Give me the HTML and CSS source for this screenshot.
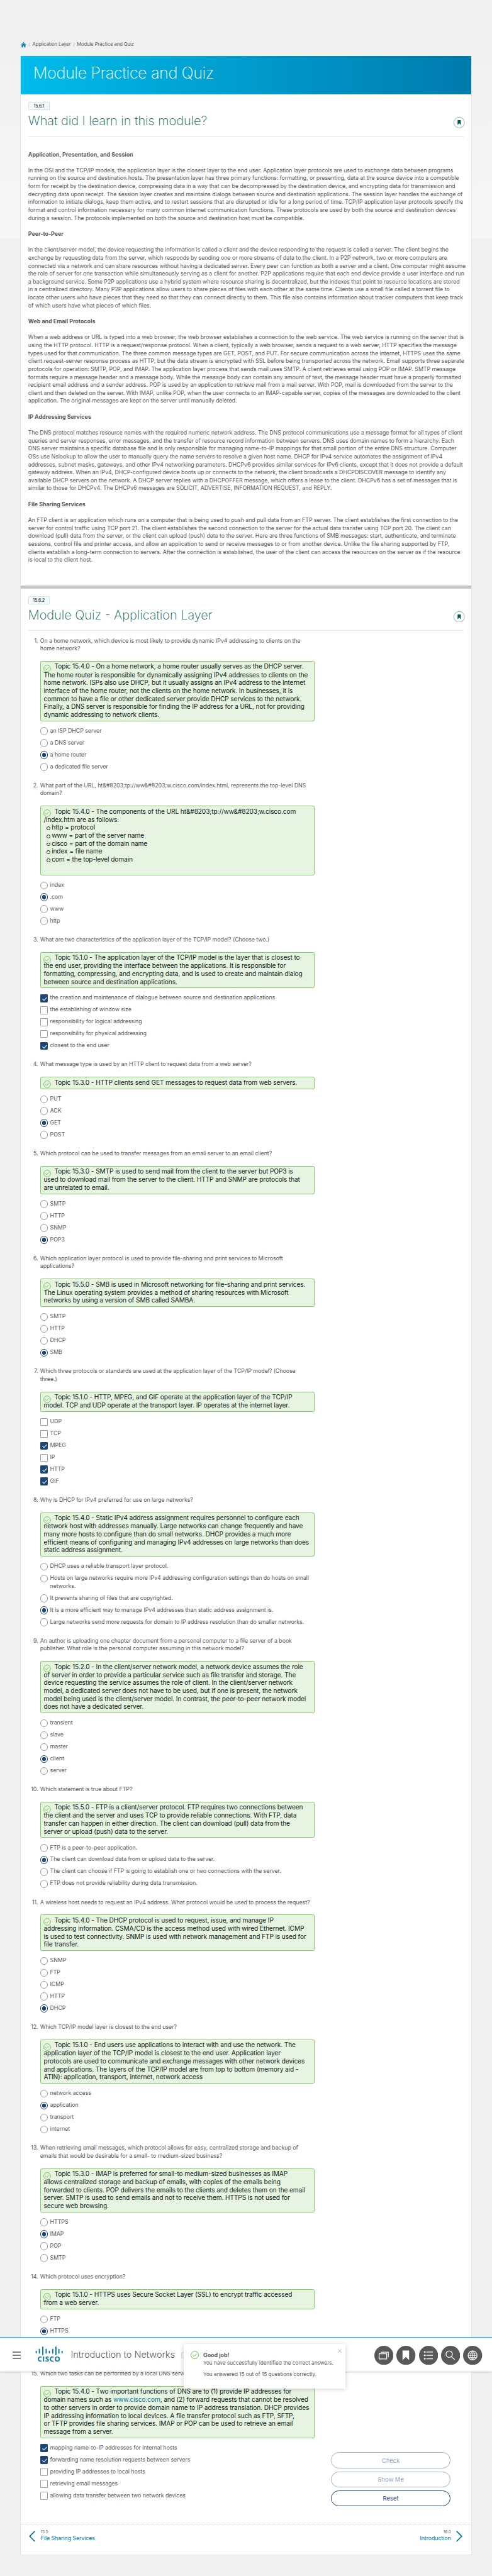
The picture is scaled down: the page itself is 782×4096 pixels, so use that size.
FILE: index.html
```html
<!DOCTYPE html>
<html lang="en">
<head>
<meta charset="utf-8">
<title>Module Practice and Quiz</title>
<link rel="stylesheet" href="styles.css">
</head>
<body>
<svg class="defs" width="0" height="0" aria-hidden="true">
  <symbol id="ok" viewBox="0 0 20 20"><circle cx="10" cy="10" r="9" fill="none" stroke="#6cc04a" stroke-width="1.5"/><path d="M5 10.3l3.3 3.1 6.5-6.6" fill="none" stroke="#6cc04a" stroke-width="1.4"/></symbol>
  <symbol id="flag" viewBox="0 0 28 28"><circle cx="14" cy="14" r="13.4" fill="#fff" stroke="#4f9489" stroke-width="1.1"/><path d="M10 8h8v12l-4-4-4 4z" fill="#005c53"/></symbol>
</svg>
<div class="page">
  <nav class="crumbs">
    <svg width="14" height="13" viewBox="0 0 14 13"><path d="M7 0L0 6.2l.8.9L7 1.7l6.2 5.4.8-.9zM7 2.8L2.2 7v6h3.4V8.6h2.8V13h3.4V7z" fill="#00799e"/></svg>
    <i>/</i><a>Application Layer</a><i>/</i><span>Module Practice and Quiz</span>
  </nav>
  <main class="card">
    <header class="banner"><h1>Module Practice and Quiz</h1></header>

    <section class="topic">
      <span class="badge">15.6.1</span>
      <div class="head"><h2>What did I learn in this module?</h2><svg width="28" height="28"><use href="#flag"/></svg></div>
      <div class="prose">
        <h3>Application, Presentation, and Session</h3>
        <p>In the OSI and the TCP/IP models, the application layer is the closest layer to the end user. Application layer protocols are used to exchange data between programs<br>running on the source and destination hosts. The presentation layer has three primary functions: formatting, or presenting, data at the source device into a compatible<br>form for receipt by the destination device, compressing data in a way that can be decompressed by the destination device, and encrypting data for transmission and<br>decrypting data upon receipt. The session layer creates and maintains dialogs between source and destination applications. The session layer handles the exchange of<br>information to initiate dialogs, keep them active, and to restart sessions that are disrupted or idle for a long period of time. TCP/IP application layer protocols specify the<br>format and control information necessary for many common internet communication functions. These protocols are used by both the source and destination devices<br>during a session. The protocols implemented on both the source and destination host must be compatible.</p>
        <h3>Peer-to-Peer</h3>
        <p>In the client/server model, the device requesting the information is called a client and the device responding to the request is called a server. The client begins the<br>exchange by requesting data from the server, which responds by sending one or more streams of data to the client. In a P2P network, two or more computers are<br>connected via a network and can share resources without having a dedicated server. Every peer can function as both a server and a client. One computer might assume<br>the role of server for one transaction while simultaneously serving as a client for another. P2P applications require that each end device provide a user interface and run<br>a background service. Some P2P applications use a hybrid system where resource sharing is decentralized, but the indexes that point to resource locations are stored<br>in a centralized directory. Many P2P applications allow users to share pieces of files with each other at the same time. Clients use a small file called a torrent file to<br>locate other users who have pieces that they need so that they can connect directly to them. This file also contains information about tracker computers that keep track<br>of which users have what pieces of which files.</p>
        <h3>Web and Email Protocols</h3>
        <p>When a web address or URL is typed into a web browser, the web browser establishes a connection to the web service. The web service is running on the server that is<br>using the HTTP protocol. HTTP is a request/response protocol. When a client, typically a web browser, sends a request to a web server, HTTP specifies the message<br>types used for that communication. The three common message types are GET, POST, and PUT. For secure communication across the internet, HTTPS uses the same<br>client request-server response process as HTTP, but the data stream is encrypted with SSL before being transported across the network. Email supports three separate<br>protocols for operation: SMTP, POP, and IMAP. The application layer process that sends mail uses SMTP. A client retrieves email using POP or IMAP. SMTP message<br>formats require a message header and a message body. While the message body can contain any amount of text, the message header must have a properly formatted<br>recipient email address and a sender address. POP is used by an application to retrieve mail from a mail server. With POP, mail is downloaded from the server to the<br>client and then deleted on the server. With IMAP, unlike POP, when the user connects to an IMAP-capable server, copies of the messages are downloaded to the client<br>application. The original messages are kept on the server until manually deleted.</p>
        <h3>IP Addressing Services</h3>
        <p>The DNS protocol matches resource names with the required numeric network address. The DNS protocol communications use a message format for all types of client<br>queries and server responses, error messages, and the transfer of resource record information between servers. DNS uses domain names to form a hierarchy. Each<br>DNS server maintains a specific database file and is only responsible for managing name-to-IP mappings for that small portion of the entire DNS structure. Computer<br>OSs use Nslookup to allow the user to manually query the name servers to resolve a given host name. DHCP for IPv4 service automates the assignment of IPv4<br>addresses, subnet masks, gateways, and other IPv4 networking parameters. DHCPv6 provides similar services for IPv6 clients, except that it does not provide a default<br>gateway address. When an IPv4, DHCP-configured device boots up or connects to the network, the client broadcasts a DHCPDISCOVER message to identify any<br>available DHCP servers on the network. A DHCP server replies with a DHCPOFFER message, which offers a lease to the client. DHCPv6 has a set of messages that is<br>similar to those for DHCPv4. The DHCPv6 messages are SOLICIT, ADVERTISE, INFORMATION REQUEST, and REPLY.</p>
        <h3>File Sharing Services</h3>
        <p>An FTP client is an application which runs on a computer that is being used to push and pull data from an FTP server. The client establishes the first connection to the<br>server for control traffic using TCP port 21. The client establishes the second connection to the server for the actual data transfer using TCP port 20. The client can<br>download (pull) data from the server, or the client can upload (push) data to the server. Here are three functions of SMB messages: start, authenticate, and terminate<br>sessions, control file and printer access, and allow an application to send or receive messages to or from another device. Unlike the file sharing supported by FTP,<br>clients establish a long-term connection to servers. After the connection is established, the user of the client can access the resources on the server as if the resource<br>is local to the client host.</p>
      </div>
    </section>

    <section class="topic quiz">
      <span class="badge">15.6.2</span>
      <div class="head"><h2>Module Quiz - Application Layer</h2><svg width="28" height="28"><use href="#flag"/></svg></div>
      <ol class="questions">
        <li><p class="ask"><b>1.</b>On a home network, which device is most likely to provide dynamic IPv4 addressing to clients on the<br>home network?</p>
          <div class="note"><svg class="ok"><use href="#ok"/></svg>Topic 15.4.0 - On a home network, a home router usually serves as the DHCP server.<br>The home router is responsible for dynamically assigning IPv4 addresses to clients on the<br>home network. ISPs also use DHCP, but it usually assigns an IPv4 address to the Internet<br>interface of the home router, not the clients on the home network. In businesses, it is<br>common to have a file or other dedicated server provide DHCP services to the network.<br>Finally, a DNS server is responsible for finding the IP address for a URL, not for providing<br>dynamic addressing to network clients.</div>
          <label><input type="radio">an ISP DHCP server</label>
          <label><input type="radio">a DNS server</label>
          <label><input type="radio" checked>a home router</label>
          <label><input type="radio">a dedicated file server</label></li>
        <li><p class="ask"><b>2.</b>What part of the URL, ht&amp;#8203;tp://ww&amp;#8203;w.cisco.com/index.html, represents the top-level DNS<br>domain?</p>
          <div class="note"><svg class="ok"><use href="#ok"/></svg>Topic 15.4.0 - The components of the URL ht&amp;#8203;tp://ww&amp;#8203;w.cisco.com<br>/index.htm are as follows:
            <ul><li>http = protocol</li><li>www = part of the server name</li><li>cisco = part of the domain name</li><li>index = file name</li><li>com = the top-level domain</li></ul></div>
          <label><input type="radio">index</label>
          <label><input type="radio" checked>.com</label>
          <label><input type="radio">www</label>
          <label><input type="radio">http</label></li>
        <li><p class="ask"><b>3.</b>What are two characteristics of the application layer of the TCP/IP model? (Choose two.)</p>
          <div class="note"><svg class="ok"><use href="#ok"/></svg>Topic 15.1.0 - The application layer of the TCP/IP model is the layer that is closest to<br>the end user, providing the interface between the applications. It is responsible for<br>formatting, compressing, and encrypting data, and is used to create and maintain dialog<br>between source and destination applications.</div>
          <label><input type="checkbox" checked>the creation and maintenance of dialogue between source and destination applications</label>
          <label><input type="checkbox">the establishing of window size</label>
          <label><input type="checkbox">responsibility for logical addressing</label>
          <label><input type="checkbox">responsibility for physical addressing</label>
          <label><input type="checkbox" checked>closest to the end user</label></li>
        <li><p class="ask"><b>4.</b>What message type is used by an HTTP client to request data from a web server?</p>
          <div class="note"><svg class="ok"><use href="#ok"/></svg>Topic 15.3.0 - HTTP clients send GET messages to request data from web servers.</div>
          <label><input type="radio">PUT</label>
          <label><input type="radio">ACK</label>
          <label><input type="radio" checked>GET</label>
          <label><input type="radio">POST</label></li>
        <li><p class="ask"><b>5.</b>Which protocol can be used to transfer messages from an email server to an email client?</p>
          <div class="note"><svg class="ok"><use href="#ok"/></svg>Topic 15.3.0 - SMTP is used to send mail from the client to the server but POP3 is<br>used to download mail from the server to the client. HTTP and SNMP are protocols that<br>are unrelated to email.</div>
          <label><input type="radio">SMTP</label>
          <label><input type="radio">HTTP</label>
          <label><input type="radio">SNMP</label>
          <label><input type="radio" checked>POP3</label></li>
        <li><p class="ask"><b>6.</b>Which application layer protocol is used to provide file-sharing and print services to Microsoft<br>applications?</p>
          <div class="note"><svg class="ok"><use href="#ok"/></svg>Topic 15.5.0 - SMB is used in Microsoft networking for file-sharing and print services.<br>The Linux operating system provides a method of sharing resources with Microsoft<br>networks by using a version of SMB called SAMBA.</div>
          <label><input type="radio">SMTP</label>
          <label><input type="radio">HTTP</label>
          <label><input type="radio">DHCP</label>
          <label><input type="radio" checked>SMB</label></li>
        <li><p class="ask"><b>7.</b>Which three protocols or standards are used at the application layer of the TCP/IP model? (Choose<br>three.)</p>
          <div class="note"><svg class="ok"><use href="#ok"/></svg>Topic 15.1.0 - HTTP, MPEG, and GIF operate at the application layer of the TCP/IP<br>model. TCP and UDP operate at the transport layer. IP operates at the internet layer.</div>
          <label><input type="checkbox">UDP</label>
          <label><input type="checkbox">TCP</label>
          <label><input type="checkbox" checked>MPEG</label>
          <label><input type="checkbox">IP</label>
          <label><input type="checkbox" checked>HTTP</label>
          <label><input type="checkbox" checked>GIF</label></li>
        <li><p class="ask"><b>8.</b>Why is DHCP for IPv4 preferred for use on large networks?</p>
          <div class="note"><svg class="ok"><use href="#ok"/></svg>Topic 15.4.0 - Static IPv4 address assignment requires personnel to configure each<br>network host with addresses manually. Large networks can change frequently and have<br>many more hosts to configure than do small networks. DHCP provides a much more<br>efficient means of configuring and managing IPv4 addresses on large networks than does<br>static address assignment.</div>
          <label><input type="radio">DHCP uses a reliable transport layer protocol.</label>
          <label><input type="radio"><span>Hosts on large networks require more IPv4 addressing configuration settings than do hosts on small<br>networks.</span></label>
          <label><input type="radio">It prevents sharing of files that are copyrighted.</label>
          <label><input type="radio" checked>It is a more efficient way to manage IPv4 addresses than static address assignment is.</label>
          <label><input type="radio">Large networks send more requests for domain to IP address resolution than do smaller networks.</label></li>
        <li><p class="ask"><b>9.</b>An author is uploading one chapter document from a personal computer to a file server of a book<br>publisher. What role is the personal computer assuming in this network model?</p>
          <div class="note"><svg class="ok"><use href="#ok"/></svg>Topic 15.2.0 - In the client/server network model, a network device assumes the role<br>of server in order to provide a particular service such as file transfer and storage. The<br>device requesting the service assumes the role of client. In the client/server network<br>model, a dedicated server does not have to be used, but if one is present, the network<br>model being used is the client/server model. In contrast, the peer-to-peer network model<br>does not have a dedicated server.</div>
          <label><input type="radio">transient</label>
          <label><input type="radio">slave</label>
          <label><input type="radio">master</label>
          <label><input type="radio" checked>client</label>
          <label><input type="radio">server</label></li>
        <li><p class="ask"><b>10.</b>Which statement is true about FTP?</p>
          <div class="note"><svg class="ok"><use href="#ok"/></svg>Topic 15.5.0 - FTP is a client/server protocol. FTP requires two connections between<br>the client and the server and uses TCP to provide reliable connections. With FTP, data<br>transfer can happen in either direction. The client can download (pull) data from the<br>server or upload (push) data to the server.</div>
          <label><input type="radio">FTP is a peer-to-peer application.</label>
          <label><input type="radio" checked>The client can download data from or upload data to the server.</label>
          <label><input type="radio">The client can choose if FTP is going to establish one or two connections with the server.</label>
          <label><input type="radio">FTP does not provide reliability during data transmission.</label></li>
        <li><p class="ask"><b>11.</b>A wireless host needs to request an IPv4 address. What protocol would be used to process the request?</p>
          <div class="note"><svg class="ok"><use href="#ok"/></svg>Topic 15.4.0 - The DHCP protocol is used to request, issue, and manage IP<br>addressing information. CSMA/CD is the access method used with wired Ethernet. ICMP<br>is used to test connectivity. SNMP is used with network management and FTP is used for<br>file transfer.</div>
          <label><input type="radio">SNMP</label>
          <label><input type="radio">FTP</label>
          <label><input type="radio">ICMP</label>
          <label><input type="radio">HTTP</label>
          <label><input type="radio" checked>DHCP</label></li>
        <li><p class="ask"><b>12.</b>Which TCP/IP model layer is closest to the end user?</p>
          <div class="note"><svg class="ok"><use href="#ok"/></svg>Topic 15.1.0 - End users use applications to interact with and use the network. The<br>application layer of the TCP/IP model is closest to the end user. Application layer<br>protocols are used to communicate and exchange messages with other network devices<br>and applications. The layers of the TCP/IP model are from top to bottom (memory aid -<br>ATIN): application, transport, internet, network access</div>
          <label><input type="radio">network access</label>
          <label><input type="radio" checked>application</label>
          <label><input type="radio">transport</label>
          <label><input type="radio">internet</label></li>
        <li><p class="ask"><b>13.</b>When retrieving email messages, which protocol allows for easy, centralized storage and backup of<br>emails that would be desirable for a small- to medium-sized business?</p>
          <div class="note"><svg class="ok"><use href="#ok"/></svg>Topic 15.3.0 - IMAP is preferred for small-to medium-sized businesses as IMAP<br>allows centralized storage and backup of emails, with copies of the emails being<br>forwarded to clients. POP delivers the emails to the clients and deletes them on the email<br>server. SMTP is used to send emails and not to receive them. HTTPS is not used for<br>secure web browsing.</div>
          <label><input type="radio">HTTPS</label>
          <label><input type="radio" checked>IMAP</label>
          <label><input type="radio">POP</label>
          <label><input type="radio">SMTP</label></li>
        <li><p class="ask"><b>14.</b>Which protocol uses encryption?</p>
          <div class="note"><svg class="ok"><use href="#ok"/></svg>Topic 15.1.0 - HTTPS uses Secure Socket Layer (SSL) to encrypt traffic accessed<br>from a web server.</div>
          <label><input type="radio">FTP</label>
          <label><input type="radio" checked>HTTPS</label>
          <label class="blank"></label>
          <label class="blank"></label></li>
        <li><p class="ask"><b>15.</b>Which two tasks can be performed by a local DNS server?</p>
          <div class="note"><svg class="ok"><use href="#ok"/></svg>Topic 15.4.0 - Two important functions of DNS are to (1) provide IP addresses for<br>domain names such as <a>www.cisco.com</a>, and (2) forward requests that cannot be resolved<br>to other servers in order to provide domain name to IP address translation. DHCP provides<br>IP addressing information to local devices. A file transfer protocol such as FTP, SFTP,<br>or TFTP provides file sharing services. IMAP or POP can be used to retrieve an email<br>message from a server.</div>
          <label><input type="checkbox" checked>mapping name-to-IP addresses for internal hosts</label>
          <label><input type="checkbox" checked>forwarding name resolution requests between servers</label>
          <label><input type="checkbox">providing IP addresses to local hosts</label>
          <label><input type="checkbox">retrieving email messages</label>
          <label><input type="checkbox">allowing data transfer between two network devices</label></li>
      </ol>
      <div class="actions"><button disabled>Check</button><button disabled>Show Me</button><button>Reset</button></div>
    </section>

    <footer class="pager">
      <a class="prev"><svg width="16" height="28" viewBox="0 0 16 28"><path d="M15 1L2 14l13 13" fill="none" stroke="#00799e" stroke-width="2.6"/></svg><span><small>15.5</small>File Sharing Services</span></a>
      <a class="next"><span><small>16.0</small>Introduction</span><svg width="16" height="28" viewBox="0 0 16 28"><path d="M1 1l13 13L1 27" fill="none" stroke="#00799e" stroke-width="2.6"/></svg></a>
    </footer>
  </main>

  <header class="topbar">
    <svg class="menu" width="21" height="19" viewBox="0 0 21 19"><path d="M0 1.5h21M0 9.5h21M0 17.5h21" stroke="#58585b" stroke-width="2.2"/></svg>
    <div class="logo">
      <svg width="70" height="22" viewBox="0 0 70 22"><path d="M2.500 12v4M10.500 7.500v9M19 1.500v19M27.500 7.500v9M35.500 12v4M44 7.500v9M52 1.500v19M59.500 7.500v9M67.500 12v4" stroke="#00799e" stroke-width="3" stroke-linecap="round"/></svg>
      <span>CISCO</span>
    </div>
    <span class="course">Introduction to Networks</span>
    <span class="chip"></span>
    <div class="tools">
      <svg viewBox="0 0 48 48"><circle cx="24" cy="24" r="24"/><path d="M12 20h19v13H12zM16 16h19v13" class="ln"/></svg>
      <svg viewBox="0 0 48 48"><circle cx="24" cy="24" r="24"/><path d="M15.500 12H32v24l-8.200-8-8.300 8z" fill="#fff"/></svg>
      <svg viewBox="0 0 48 48"><circle cx="24" cy="24" r="24"/><path d="M18.500 15.500H35M18.500 24H35M18.500 32.500H35" class="ln"/><circle class="dot" cx="14.500" cy="15.500" r="2.200"/><circle class="dot" cx="14.500" cy="24" r="2.200"/><circle class="dot" cx="14.500" cy="32.500" r="2.200"/></svg>
      <svg viewBox="0 0 48 48"><circle cx="24" cy="24" r="24"/><circle cx="20.500" cy="21" r="8" class="ln"/><path d="M25 26l9.500 9" class="ln"/></svg>
      <svg viewBox="0 0 48 48"><circle cx="24" cy="24" r="24"/><circle cx="24" cy="24" r="11.300" class="ln"/><path d="M24 13v22M13 24h22M14.500 18.500h19M14.500 29.500h19M24 13c-7 6-7 16 0 22M24 13c7 6 7 16 0 22" class="ln thin"/></svg>
    </div>
  </header>

  <aside class="toast">
    <svg class="ok"><use href="#ok"/></svg>
    <div><strong>Good job!</strong><p>You have successfully identified the correct answers.</p><p>You answered 15 out of 15 questions correctly.</p></div>
    <svg class="close" width="10" height="10" viewBox="0 0 10 10"><path d="M.8.8l8.400 8.400M9.200.8L.8 9.200" stroke="#cfcfcf" stroke-width="2"/></svg>
  </aside>
</div>
</body>
</html>
```
FILE: styles.css
```css
* { box-sizing: border-box; }
html, body { margin: 0; background: #f0f0f0; }
h1, h2, h3, p, ol, ul { margin: 0; padding: 0; font-weight: inherit; }
.defs { position: absolute; }

.page {
  position: relative;
  zoom: 0.6322;
  width: 1236.900px;
  height: 6477px;
  padding: 0 51px;
  background: #f0f0f0 linear-gradient(#f1f1f1 130px, #f7f7f7 600px) 0 0 / 100% 600px no-repeat;
  color: #58585b;
  font: 400 14px/20px Inter, "Liberation Sans", sans-serif;
  white-space: nowrap;
}

.crumbs { display: flex; align-items: center; height: 141px; padding: 85px 0 0 1px; gap: 5.600px; font-size: 12px; letter-spacing: -.1px; }
.crumbs i { font-style: normal; color: #aaa; }

.card { height: 6286px; border: solid #e4e4e4; border-width: 0 1px 1px; margin: 0 0 0 -1px; width: 1136px; background: #fff; }
.banner { height: 96px; padding: 19px 32px; background: linear-gradient(90deg, #00bceb, #007bae); color: #fff; }
.banner h1 { font: 200 40px/50px Inter, sans-serif; letter-spacing: -.7px; }

.topic { height: 1235px; padding: 20px 20px 0 19.300px; }
.badge { display: block; width: 54px; height: 20px; border: 1px solid #cfe4e3; border-bottom-width: 2px; border-radius: 2px; background: #f3fbff; color: #111; font-size: 11px; line-height: 18px; text-align: center; }
.head { display: flex; justify-content: space-between; align-items: flex-start; height: 67px; margin-right: -1px; padding: 17px 0 0; border-bottom: 2px solid #dbe7e7; }
.head h2 { margin-top: -6px; font: 200 31.500px/32px Inter, sans-serif; color: #005c53; }
.head > svg { margin-right: -3px; flex: none; }
.prose { padding-top: 35px; letter-spacing: -.08px; }
.prose h3 { font-weight: 700; font-size: 14px; margin-bottom: 20px; letter-spacing: 0; }
.prose p { margin-bottom: 20px; }

.quiz { position: relative; border-top: 8px solid #c6c7ca; height: 4875px; }
.questions { list-style: none; padding: 15px 0 0 30px; width: 719.300px; letter-spacing: -.095px; }
.questions > li { padding-bottom: 17.800px; }
.ask { position: relative; margin-bottom: 21px; }
.ask b { position: absolute; right: 100%; margin-right: 5px; font-weight: 400; }
.note { min-height: 30px; margin-bottom: 14.500px; padding: 2px 7.500px 4.800px; border: 1px solid #7fcc62; border-radius: 4px; background: #e8f4e2; color: #0b2318; font-size: 16px; letter-spacing: -.15px; }
.note .ok { width: 19px; height: 19px; margin: -4px 8px -4px 0; vertical-align: -5px; }
.note ul { list-style: none; padding-bottom: 24px; }
.note ul li { padding-left: 20px; position: relative; }
.note ul li::before { content: ""; position: absolute; left: 7px; top: 8px; width: 6px; height: 6px; border: 1px solid #0b2318; border-radius: 50%; }
.note a { color: #00799e; }
label { display: flex; align-items: flex-start; min-height: 30px; }
label span { padding-bottom: 10px; }
input { appearance: none; flex: none; width: 20px; height: 20px; margin: 1px 5px 0 0; border: 1px solid #9a9a9c; border-radius: 50%; background: #fff; }
input[type=checkbox] { border-radius: 2px; }
input[type=radio]:checked { border: 2.500px solid #1c4475; background: radial-gradient(#1c4475 4.500px, #fff 5.500px); }
input[type=checkbox]:checked { border-color: #1c4475; background: #1c4475; }
input[type=checkbox]:checked::after { content: ""; display: block; width: 5px; height: 9px; margin: 3px 0 0 6px; border: solid #fff; border-width: 0 2px 2px 0; transform: rotate(42deg); }

.actions { position: absolute; right: 52px; bottom: 43px; display: grid; gap: 8px; }
.actions button { width: 300px; height: 40px; padding: 0; border: 1px solid #1c4475; border-radius: 20px; background: #fff; color: #1c4475; font: 400 15px Inter, sans-serif; }
.actions button:disabled { border-color: #a3b2c8; color: #96a5bc; }

.pager { display: flex; justify-content: space-between; height: 79px; padding: 16px 21px 0; border-top: 1px dotted #c9c9c9; color: #00799e; font-size: 14px; line-height: 16px; letter-spacing: -.15px; }
.pager a { display: flex; gap: 14px; }
.pager small { display: block; margin-top: -2px; font-size: 10px; line-height: 14px; color: #58585b; }
.next { text-align: right; }

.topbar { position: absolute; left: 0; top: 5878px; width: 1236.900px; height: 87px; display: flex; align-items: center; padding: 2px 24px 0 32px; border-top: 3px solid #00bceb; background: #fff; box-shadow: 0 1px 3px rgba(0,0,0,.25); }
.logo { margin-left: 35px; width: 70px; text-align: center; color: #00799e; font: 700 18px/20px "Open Sans", sans-serif; letter-spacing: 1px; }
.logo svg { display: block; }
.course { margin-left: 20px; font: 300 23px/28px Inter, sans-serif; letter-spacing: -.07px; }
.chip { margin-left: 16px; width: 30px; height: 16px; border: 1px solid #cfe4e3; border-radius: 2px; background: #eef7f8; }
.tools { display: flex; gap: 8px; margin-left: auto; }
.tools svg { width: 48px; height: 48px; fill: #58585b; }
.tools .ln { fill: none; stroke: #fff; stroke-width: 2; }
.tools .thin { stroke-width: 1.500; }
.tools .dot { fill: #fff; }

.toast { position: absolute; left: 462px; top: 5895px; width: 406px; height: 112px; display: flex; padding: 18px 9px 0 18px; background: #fff; box-shadow: 0 2px 12px rgba(0,0,0,.2); font-size: 13px; }
.toast .ok { width: 21px; height: 21px; margin-right: 10px; }
.toast strong { display: block; padding-top: 1px; margin-bottom: -1px; font-size: 14px; }
.toast p + p { margin-top: 8px; }
.toast .close { margin: -5px 0 0 auto; }
```
